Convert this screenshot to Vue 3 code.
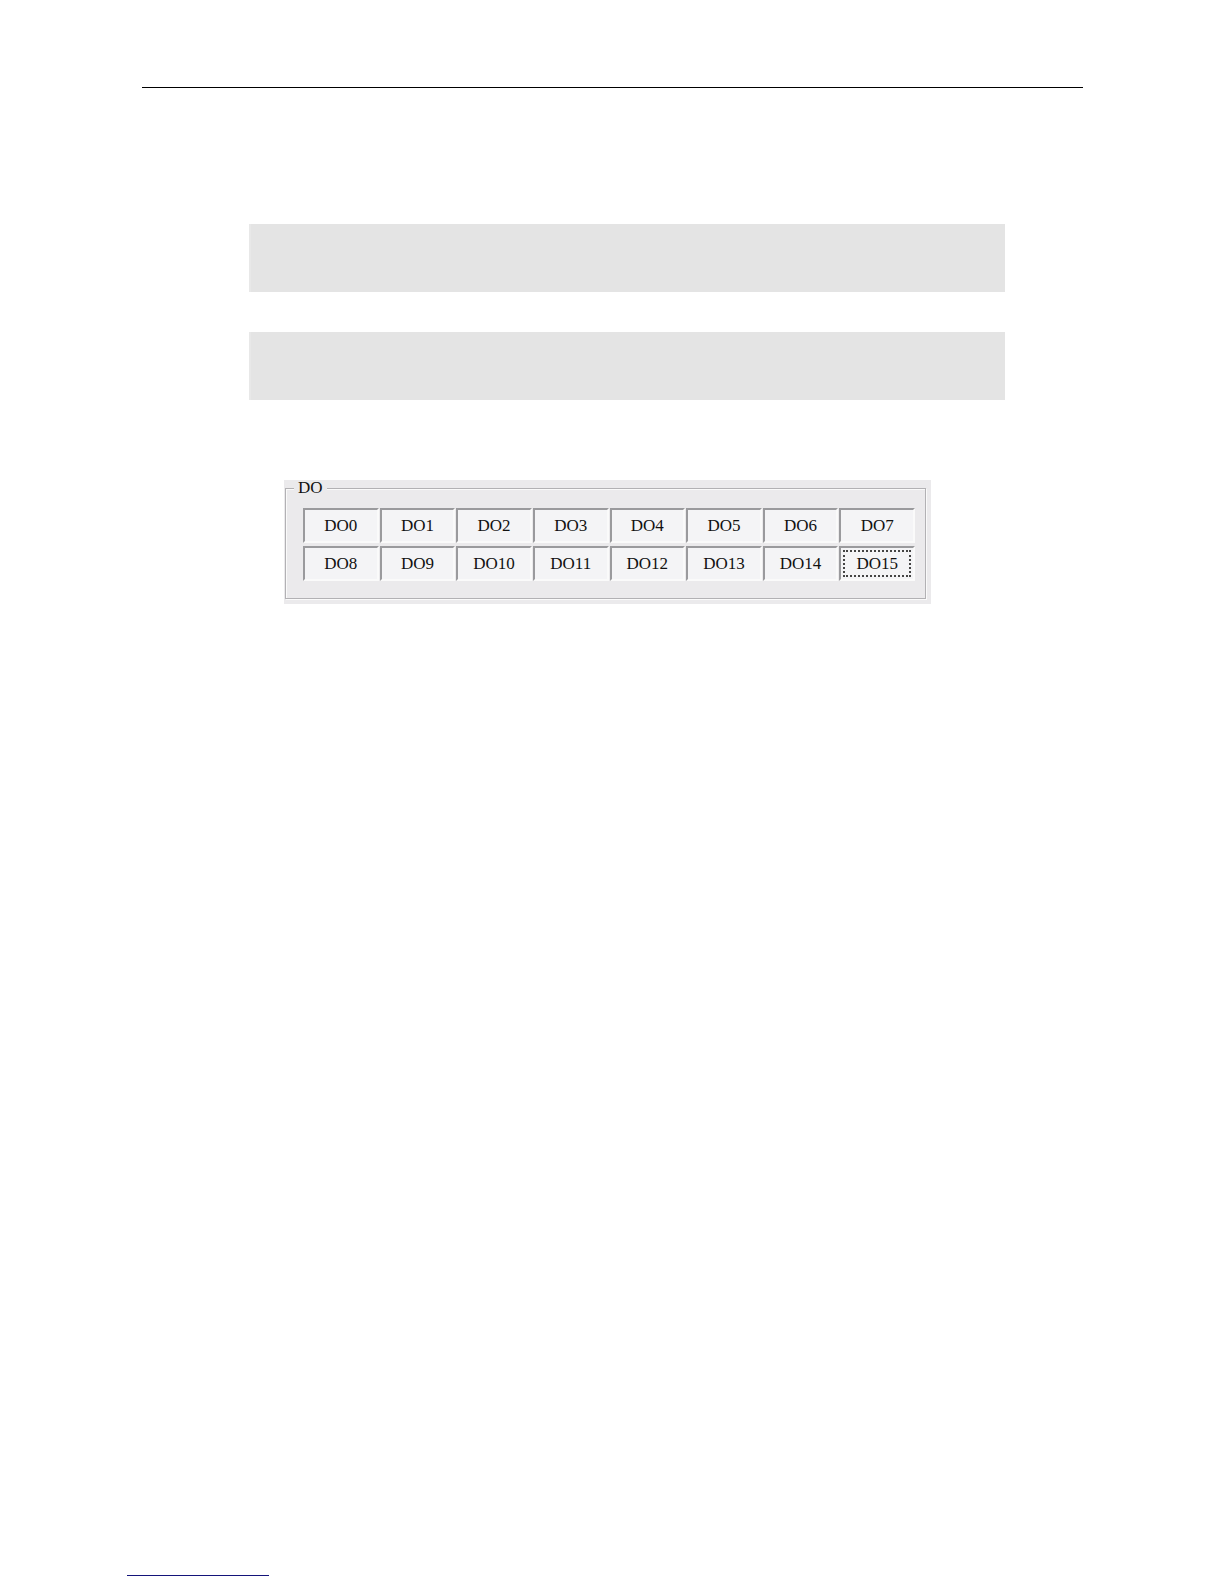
<template>
  <div class="page">
    <hr class="header-rule" />

    <main class="content">
      <div class="block"></div>
      <div class="block"></div>

      <section class="panel">
        <fieldset class="group">
          <legend>DO</legend>
          <div class="outputs">
            <button
              v-for="(on, i) in outputs"
              :key="i"
              type="button"
              class="output"
              :class="{ pressed: on, current: i === current }"
              :aria-pressed="on"
              @click="toggle(i)"
            >
              DO{{ i }}
            </button>
          </div>
        </fieldset>
      </section>
    </main>

    <hr class="footer-rule" />
  </div>
</template>

<script setup>
import { ref } from 'vue';

const outputs = ref(Array(16).fill(true));
const current = ref(15);

function toggle(i) {
  outputs.value[i] = !outputs.value[i];
  current.value = i;
}
</script>

<style>
body {
  margin: 0;
  background: #fff;
}
</style>

<style scoped>
.page {
  box-sizing: border-box;
  display: flex;
  flex-direction: column;
  min-height: 100vh;
  padding: 87px 141px 8px 127px;
  font-family: "Liberation Serif", "Times New Roman", serif;
  font-size: 17px;
  color: #111;
}

hr {
  box-sizing: border-box;
  height: 1px;
  margin: 0;
  border: 0;
}

.header-rule {
  margin-left: 15px;
  background: #000;
}

.footer-rule {
  width: 142px;
  margin-top: auto;
  background: #14147a;
}

.content {
  display: flex;
  flex-direction: column;
  gap: 40px;
  padding: 136px 78px 40px 122px;
}

.block {
  box-sizing: border-box;
  height: 68px;
  border-left: 2px solid #e8e8e8;
  background: #e4e4e4;
}

.panel {
  box-sizing: border-box;
  max-width: 647px;
  margin: 40px 0 0 35px;
  padding: 0 5px 5px 1px;
  background: #ebeaec;
}

.group {
  min-width: 0;
  margin: 0;
  padding: 12px 10px 17px 17px;
  border: 1px solid #b2b1b4;
  box-shadow: 1px 1px 0 #fafafa, inset 1px 1px 0 #fafafa;
}

legend {
  margin-left: -9px;
  padding: 0 4px;
  line-height: 16px;
  background: #ebeaec;
}

.outputs {
  display: grid;
  grid-template-columns: repeat(8, minmax(0, 1fr));
  gap: 3px 1px;
}

.output {
  height: 35px;
  padding: 0;
  border: 2px solid;
  border-color: #fafafa #9a9a9d #9a9a9d #fafafa;
  background: #ebeaec;
  font: inherit;
  color: inherit;
}

.output.pressed {
  border-color: #9a9a9d #fafafa #fafafa #9a9a9d;
  background: #f4f4f6;
}

.output.current {
  outline: 2px dotted #444;
  outline-offset: -6px;
}
</style>
